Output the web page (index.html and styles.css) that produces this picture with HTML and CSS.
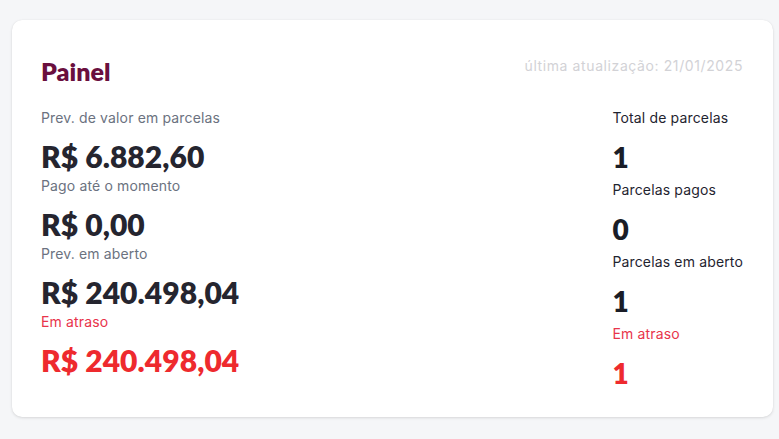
FILE: index.html
```html
<!DOCTYPE html>
<html lang="pt-BR">
<head>
<meta charset="utf-8">
<title>Painel</title>
<link rel="stylesheet" href="styles.css">
</head>
<body>
<div class="page">
  <section class="card">
    <header class="card-header">
      <h1 class="title">Painel</h1>
      <span class="updated">última atualização: 21/01/2025</span>
    </header>
    <div class="card-body">
      <div class="col col-left">
        <div class="stat">
          <div class="label">Prev. de valor em parcelas</div>
          <div class="value">R$ 6.882,60</div>
        </div>
        <div class="stat">
          <div class="label">Pago até o momento</div>
          <div class="value">R$ 0,00</div>
        </div>
        <div class="stat">
          <div class="label">Prev. em aberto</div>
          <div class="value">R$ 240.498,04</div>
        </div>
        <div class="stat danger">
          <div class="label">Em atraso</div>
          <div class="value">R$ 240.498,04</div>
        </div>
      </div>
      <div class="col col-right">
        <div class="stat">
          <div class="label">Total de parcelas</div>
          <div class="value">1</div>
        </div>
        <div class="stat">
          <div class="label">Parcelas pagos</div>
          <div class="value">0</div>
        </div>
        <div class="stat">
          <div class="label">Parcelas em aberto</div>
          <div class="value">1</div>
        </div>
        <div class="stat danger">
          <div class="label">Em atraso</div>
          <div class="value">1</div>
        </div>
      </div>
    </div>
  </section>
</div>
</body>
</html>
```

FILE: styles.css
```css
* { box-sizing: border-box; }
html, body { margin: 0; padding: 0; }
body {
  background: #f5f6f8;
  font-family: "Inter", "Noto Sans", sans-serif;
  width: 779px;
  height: 439px;
  overflow: hidden;
}
.page {
  padding: 20px 6px 0 12px;
}
.card {
  background: #ffffff;
  border-radius: 10px;
  box-shadow: 0 1px 3px rgba(0, 0, 0, 0.12), 0 0 1px rgba(0, 0, 0, 0.08);
  height: 397px;
  padding: 36px 30px 0 29px;
}
.card-header {
  display: flex;
  justify-content: space-between;
  align-items: flex-start;
  height: 52px;
}
.title {
  margin: 0;
  font-family: "Lato", sans-serif;
  font-weight: 800;
  font-size: 25px;
  line-height: 30px;
  color: #6a0f3e;
}
.updated {
  font-size: 14px;
  line-height: 20px;
  color: #d2d2d6;
  letter-spacing: 0.6px;
}
.card-body {
  display: flex;
  justify-content: space-between;
}
.col { display: flex; flex-direction: column; }
.label {
  font-size: 14px;
  line-height: 20px;
  letter-spacing: 0.15px;
}
.value {
  font-family: "Lato", sans-serif;
  font-weight: 800;
  line-height: 36px;
  letter-spacing: 0.05px;
}
.col-left .label { color: #6b7280; }
.col-left .value {
  font-size: 30px;
  color: #25252f;
  margin-top: 10px;
  margin-bottom: 2px;
}
.col-right .label { color: #1f2430; }
.col-right .value {
  font-size: 28px;
  color: #1a1d27;
  margin-top: 11px;
  margin-bottom: 5px;
}
.col-left .danger .label,
.col-right .danger .label { color: #e8344b; }
.col-left .danger .value,
.col-right .danger .value { color: #ee2a2e; }
```
